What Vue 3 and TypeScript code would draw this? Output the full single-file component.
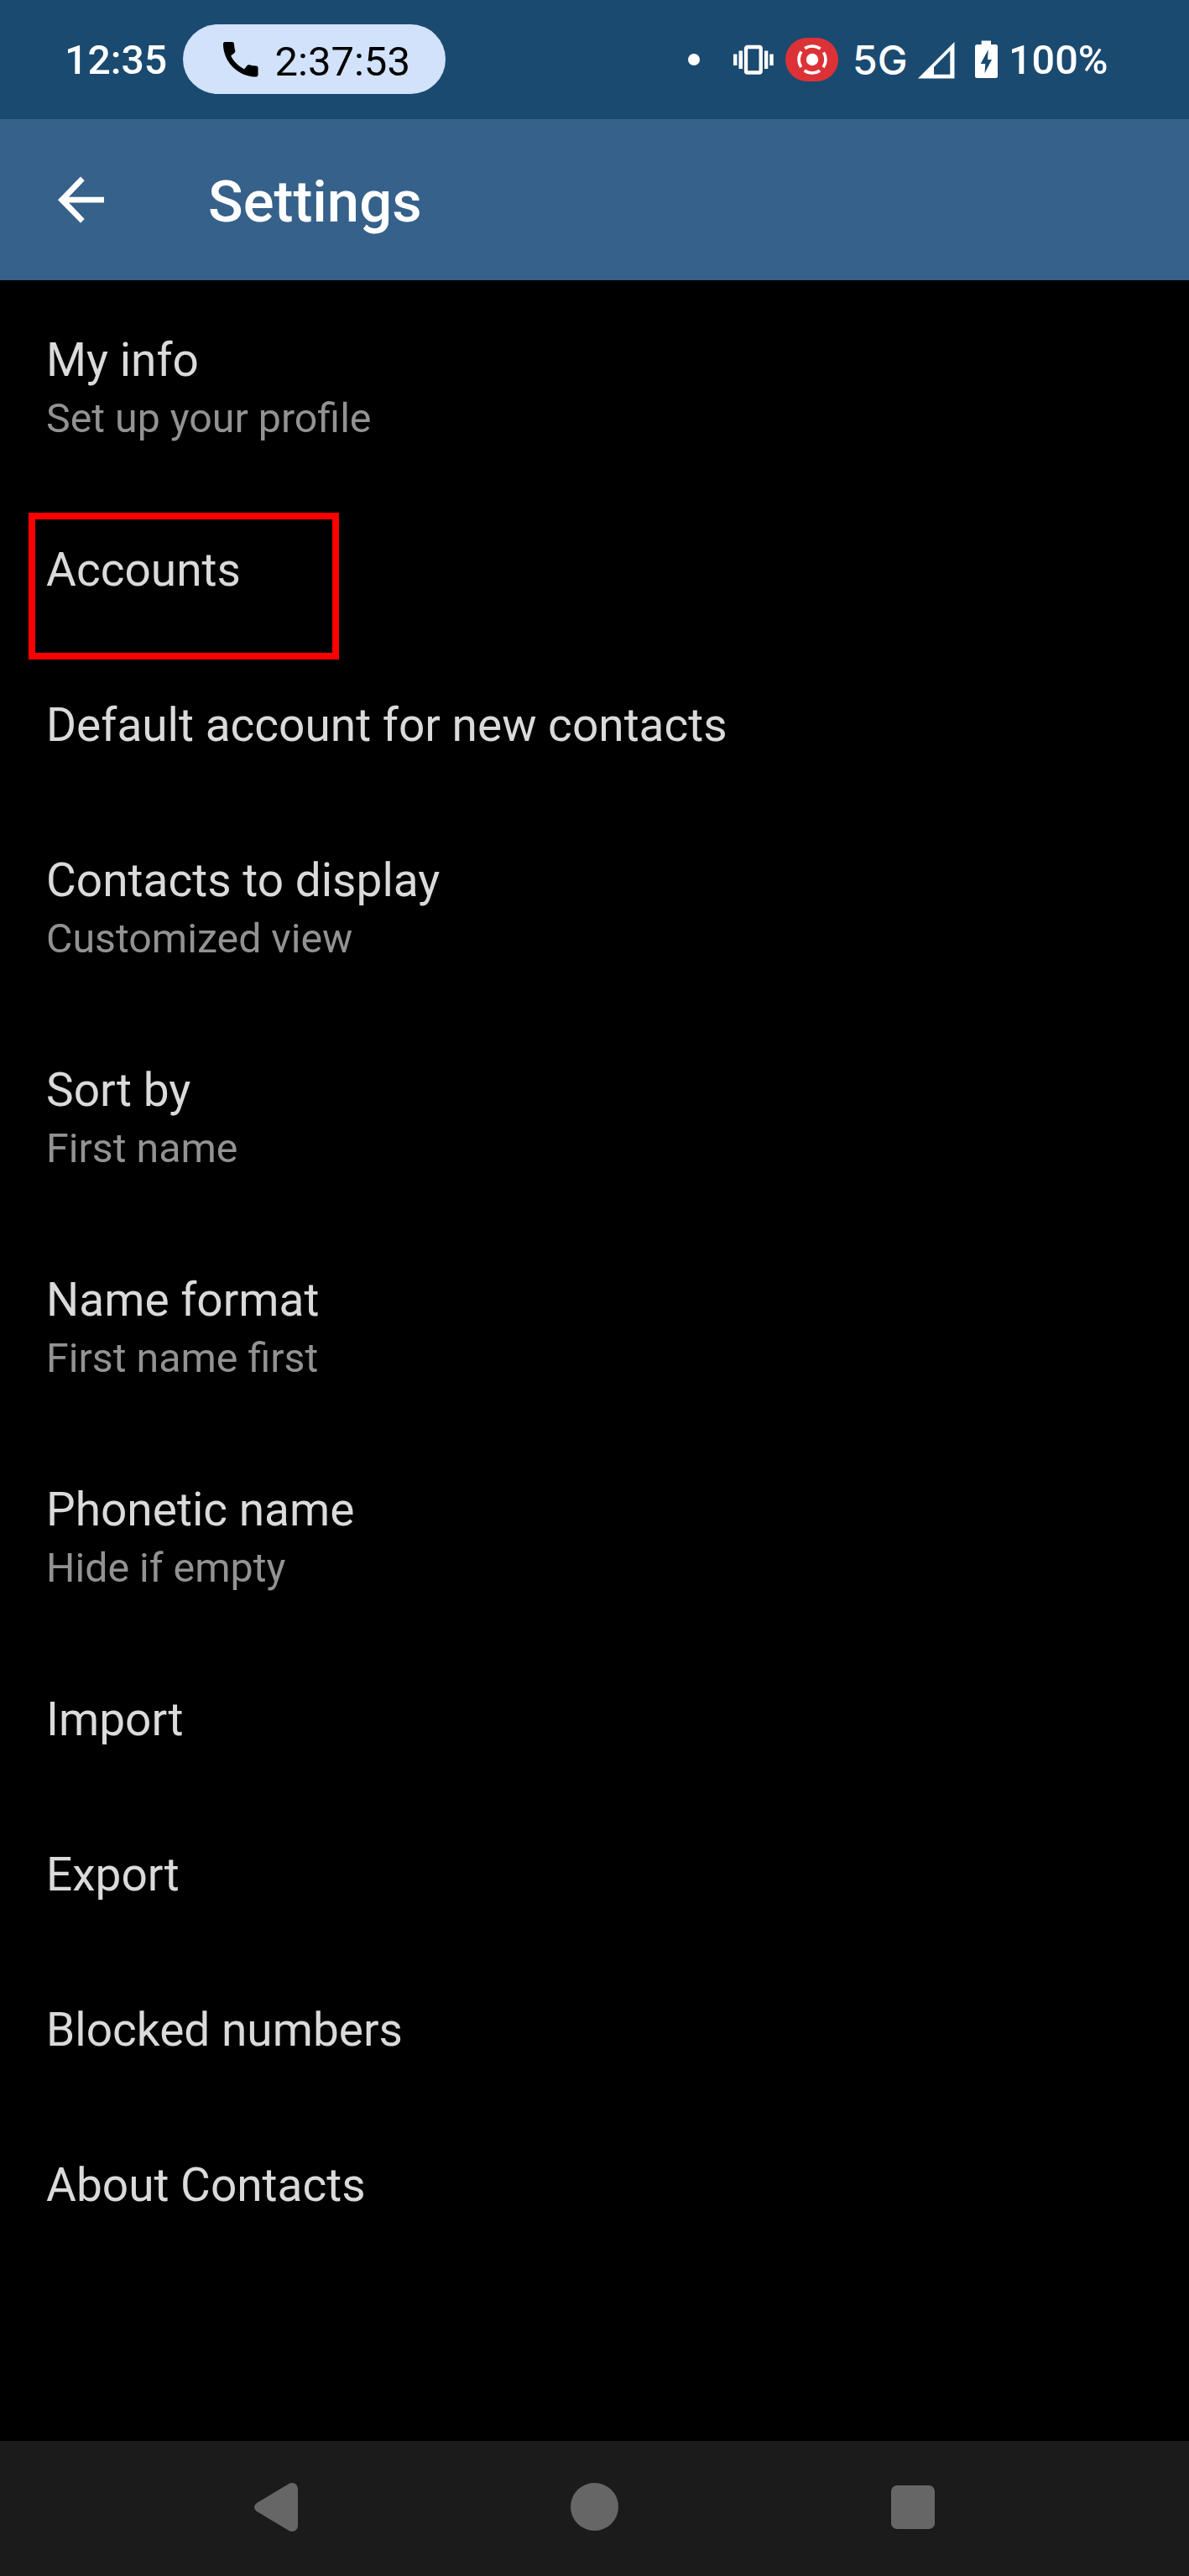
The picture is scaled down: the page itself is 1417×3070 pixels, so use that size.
<script setup lang="ts">
interface Setting {
  title: string
  summary?: string
  highlighted?: boolean
}

const settings: Setting[] = [
  { title: 'My info', summary: 'Set up your profile' },
  { title: 'Accounts', highlighted: true },
  { title: 'Default account for new contacts' },
  { title: 'Contacts to display', summary: 'Customized view' },
  { title: 'Sort by', summary: 'First name' },
  { title: 'Name format', summary: 'First name first' },
  { title: 'Phonetic name', summary: 'Hide if empty' },
  { title: 'Import' },
  { title: 'Export' },
  { title: 'Blocked numbers' },
  { title: 'About Contacts' },
]
</script>

<template>
  <div class="screen">
    <header class="status">
      <span class="clock">12:35</span>
      <div class="call">
        <svg class="phone" viewBox="0 0 24 24">
          <path d="M20.01 15.38c-1.23 0-2.42-.2-3.53-.56a.98.98 0 0 0-1.01.24l-1.57 1.97c-2.83-1.35-5.48-3.9-6.89-6.83l1.95-1.66c.27-.28.35-.67.24-1.02-.37-1.11-.56-2.3-.56-3.53 0-.54-.45-.99-.99-.99H4.19C3.65 3 3 3.24 3 3.99 3 13.28 10.73 21 20.01 21c.71 0 .99-.63.99-1.18v-3.45c0-.54-.45-.99-.99-.99z" />
        </svg>
        <span class="call-time">2:37:53</span>
      </div>
      <div class="indicators">
        <span class="dot"></span>
        <svg class="vibrate" viewBox="0 0 50 36">
          <path d="M1 11.5h4.4V25H1zM7.5 7.5H12V29H7.5zM38 7.5h4.300V29H38zM44.3 11.5h4.400V25h-4.400z" fill="#fff" />
          <rect x="16" y="3" width="17.7" height="30.5" rx="1.8" fill="none" stroke="#fff" stroke-width="4.3" />
        </svg>
        <span class="record">
          <svg viewBox="0 0 40 40">
            <circle cx="20" cy="20" r="7.2" fill="#fff" />
            <circle class="ring" cx="20" cy="20" r="16" />
          </svg>
        </span>
        <span class="network">5G</span>
        <svg class="signal" viewBox="0 0 44 44">
          <path fill-rule="evenodd" d="M43.5 0V43.5H0ZM19 30V38.7H38.3V10.5Z" fill="#fff" />
        </svg>
        <svg class="battery" viewBox="0 0 27 46">
          <path fill-rule="evenodd" d="M7.7.5H19V5h5.5A2.5 2.5 0 0 1 27 7.5v35A2.5 2.5 0 0 1 24.5 45h-22A2.5 2.5 0 0 1 0 42.5v-35A2.5 2.5 0 0 1 2.5 5h5.200zM15.7 11.3 6.7 28H12.3L11.5 39.3 20 23H15Z" fill="#fff" />
        </svg>
        <span class="percent">100%</span>
      </div>
    </header>

    <div class="appbar">
      <svg class="back" viewBox="0 0 55 56">
        <path d="M55 24.7H13L31.7 5.3 27 .5 0 28.2 27 55.7 31.7 50.9 13 31.6H55Z" fill="#fff" />
      </svg>
      <h1>Settings</h1>
    </div>

    <main class="list">
      <section v-for="s in settings" :key="s.title" class="row">
        <div class="title">{{ s.title }}</div>
        <div v-if="s.summary" class="summary">{{ s.summary }}</div>
        <span v-if="s.highlighted" class="highlight"></span>
      </section>
    </main>

    <nav class="navbar">
      <svg class="nav-back" viewBox="0 0 52 58">
        <path d="M3 24 41 1.2Q46-1.5 50 2 52 4 52 7.5V50.5Q52 54 50 56 46 59.5 41 56.8L3 34Q-3 29 3 24Z" />
      </svg>
      <span class="nav-home"></span>
      <span class="nav-recents"></span>
    </nav>
  </div>
</template>

<style>
body {
  background: #000;
}
</style>

<style scoped>
.screen {
  display: flex;
  flex-direction: column;
  width: 1417px;
  height: 3070px;
  overflow: hidden;
  background: #000;
  color: #fff;
  font-family: Roboto, sans-serif;
}

svg {
  display: block;
  flex: none;
}

.status {
  display: flex;
  align-items: center;
  flex: none;
  height: 142px;
  padding: 0 96px 0 77px;
  box-sizing: border-box;
  background: #1b4a70;
}

.clock {
  width: 140.5px;
  font-size: 48.2px;
  font-weight: 500;
  line-height: 57px;
}

.call {
  display: flex;
  align-items: center;
  width: 313px;
  height: 83px;
  margin-bottom: 1px;
  padding-left: 41px;
  box-sizing: border-box;
  border-radius: 42px;
  background: #d2e2fb;
  color: #000;
}

.phone {
  width: 55.5px;
  height: 55.5px;
}

.call-time {
  margin-left: 13.5px;
  padding-top: 5px;
  font-size: 49px;
  line-height: 57px;
}

.indicators {
  display: flex;
  align-items: center;
  margin-left: auto;
}

.dot {
  width: 14px;
  height: 14px;
  border-radius: 50%;
  background: #fff;
}

.vibrate {
  width: 50px;
  height: 36px;
  margin-left: 39px;
}

.record {
  display: flex;
  align-items: center;
  justify-content: center;
  width: 63px;
  height: 52px;
  margin-left: 13px;
  border-radius: 26px;
  background: #dc3237;
}

.record svg {
  width: 40px;
  height: 40px;
}

.ring {
  fill: none;
  stroke: #fff;
  stroke-width: 3.6;
  stroke-dasharray: 19.5 5.63;
  stroke-dashoffset: 9.75;
}

.network {
  width: 64px;
  margin-left: 17px;
  font-family: Inter, sans-serif;
  font-size: 48px;
  font-weight: 500;
  line-height: 57px;
}

.signal {
  width: 44px;
  height: 44px;
  margin: 2px 0 0 14px;
}

.battery {
  width: 27px;
  height: 46px;
  margin-left: 24px;
}

.percent {
  width: 119px;
  margin-left: 13px;
  font-size: 48.6px;
  font-weight: 500;
  line-height: 57px;
}

.appbar {
  display: flex;
  align-items: center;
  flex: none;
  height: 192px;
  padding-left: 69px;
  background: #36618a;
}

.back {
  width: 55px;
  height: 56px;
}

h1 {
  margin: 5px 0 0 124px;
  font-size: 68.8px;
  font-weight: 500;
  line-height: 80px;
}

.list {
  flex: 1;
  padding-top: 3px;
}

.row {
  position: relative;
  padding: 59px 55px 60px;
}

.title {
  color: #dadada;
  font-size: 55px;
  line-height: 66px;
}

.summary {
  padding-top: 8px;
  color: #929292;
  font-size: 48.3px;
  line-height: 57px;
}

.highlight {
  position: absolute;
  top: 24px;
  left: 34px;
  width: 370px;
  height: 175px;
  box-sizing: border-box;
  border: 8px solid #f00;
}

.navbar {
  display: flex;
  align-items: center;
  justify-content: space-between;
  flex: none;
  height: 161px;
  padding: 0 303.5px 4px 303px;
  box-sizing: border-box;
  background: #1b1b1b;
}

.nav-back {
  width: 52px;
  height: 58px;
  fill: #666;
}

.nav-home {
  width: 57.5px;
  height: 57.5px;
  border-radius: 50%;
  background: #666;
}

.nav-recents {
  width: 52px;
  height: 52px;
  border-radius: 7px;
  background: #666;
}
</style>
